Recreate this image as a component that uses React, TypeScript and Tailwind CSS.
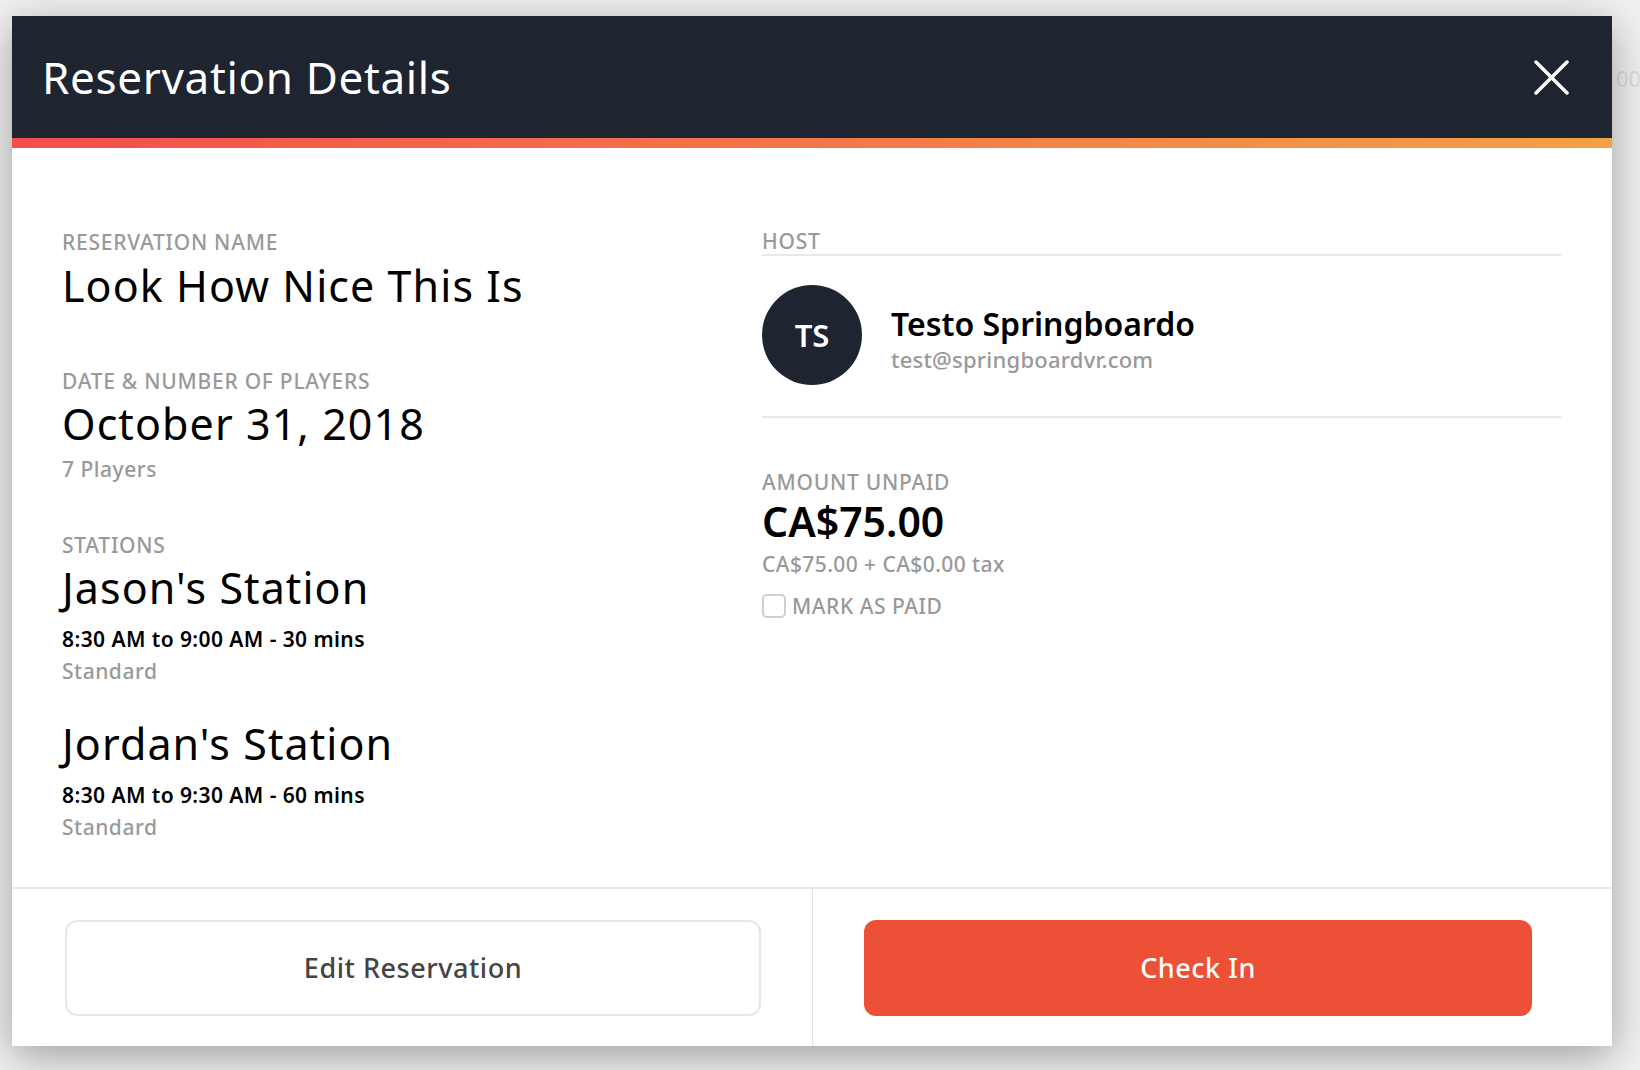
import React from 'react';

const font = { fontFamily: '"Noto Sans", "Open Sans", Arial, sans-serif' };

const Label: React.FC<{ children: React.ReactNode; className?: string }> = ({ children, className = '' }) => (
  <div className={`text-[21px] leading-[28px] font-medium tracking-[0.035em] uppercase text-[#999999] ${className}`}>{children}</div>
);

const Station: React.FC<{ name: string; time: string; kind: string; className?: string }> = ({ name, time, kind, className = '' }) => (
  <div className={className}>
    <div className="text-[43px] leading-[50px] tracking-[0.025em] text-black">{name}</div>
    <div className="mt-[12px] text-[21px] leading-[28px] font-semibold tracking-[0.02em] text-black">{time}</div>
    <div className="mt-[4px] text-[21px] leading-[28px] font-medium tracking-[0.025em] text-[#999999]">{kind}</div>
  </div>
);

export default function App() {
  return (
    <div className="relative w-[1640px] h-[1070px] bg-[#f1f1f1] pt-[16px] pl-[12px] overflow-hidden" style={font}>
      <span className="absolute left-[1616px] top-[62px] text-[22px] text-[#dddddd]">00</span>
      <div className="relative w-[1600px] h-[1030px] bg-white flex flex-col shadow-[0_10px_40px_rgba(0,0,0,0.35)]">
        {/* Header */}
        <div className="h-[122px] bg-[#1e2430] flex items-center justify-between pl-[30px] pr-[43px]">
          <h1 className="text-[44px] leading-[60px] font-normal tracking-[0.015em] text-white">Reservation Details</h1>
          <button className="w-[35px] h-[35px] flex items-center justify-center">
            <svg viewBox="0 0 35 35" className="w-[35px] h-[35px]">
              <path d="M2 2 L33 33 M33 2 L2 33" stroke="white" strokeWidth="3.5" strokeLinecap="round" />
            </svg>
          </button>
        </div>
        <div className="h-[10px] bg-gradient-to-r from-[#f44c4d] via-[#f37648] to-[#f3a145]" />

        {/* Body */}
        <div className="flex-1 flex pt-[80px] pl-[50px] pr-[51px]">
          {/* Left column */}
          <div className="w-[700px]">
            <Label>Reservation Name</Label>
            <div className="mt-[5px] text-[43px] leading-[50px] tracking-[0.025em] text-black">Look How Nice This Is</div>

            <Label className="mt-[56px]">Date &amp; Number of Players</Label>
            <div className="mt-[4px] text-[43px] leading-[50px] tracking-[0.025em] text-black">October 31, 2018</div>
            <div className="mt-[6px] text-[21px] leading-[28px] font-medium tracking-[0.025em] text-[#999999]">7 Players</div>

            <Label className="mt-[48px]">Stations</Label>
            <Station className="mt-[4px]" name="Jason's Station" time="8:30 AM to 9:00 AM - 30 mins" kind="Standard" />
            <Station className="mt-[34px]" name="Jordan's Station" time="8:30 AM to 9:30 AM - 60 mins" kind="Standard" />
          </div>

          {/* Right column */}
          <div className="flex-1">
            <div className="text-[21px] leading-[26px] font-medium tracking-[0.035em] uppercase text-[#999999] border-b-2 border-[#e8e8e8]">Host</div>
            <div className="mt-[29px] pb-[31px] border-b-2 border-[#e8e8e8] flex items-center">
              <div className="w-[100px] h-[100px] rounded-full bg-[#1e2430] flex items-center justify-center text-white text-[31px] font-semibold">
                TS
              </div>
              <div className="ml-[29px] pt-[8px]">
                <div className="text-[32px] leading-[40px] font-semibold text-black">Testo Springboardo</div>
                <div className="text-[22px] leading-[30px] font-medium tracking-[0.01em] text-[#999999]">test@springboardvr.com</div>
              </div>
            </div>

            <Label className="mt-[50px] leading-[24px]">Amount Unpaid</Label>
            <div className="mt-[2px] text-[41px] leading-[46px] font-semibold text-black">CA$75.00</div>
            <div className="mt-[6px] text-[21px] leading-[28px] font-medium tracking-[0.02em] text-[#999999]">CA$75.00 + CA$0.00 tax</div>
            <label className="mt-[14px] flex items-center">
              <span className="w-[24px] h-[24px] rounded-[5px] border-2 border-[#cfcfcf] bg-white" />
              <span className="ml-[6px] text-[21px] leading-[28px] font-medium tracking-[0.025em] uppercase text-[#999999]">Mark as paid</span>
            </label>
          </div>
        </div>

        {/* Footer */}
        <div className="h-[159px] border-t-2 border-[#e8e8e8] flex">
          <div className="w-[801px] border-r border-[#e4e4e4] pt-[31px] pl-[53px]">
            <button className="w-[696px] h-[96px] rounded-[12px] border-2 border-[#e6e6e6] bg-white text-[27px] font-medium tracking-[0.02em] text-[#444444]">
              Edit Reservation
            </button>
          </div>
          <div className="flex-1 pt-[31px] pl-[51px]">
            <button className="w-[668px] h-[96px] rounded-[12px] bg-[#ec5036] text-[27px] font-medium tracking-[0.02em] text-white">
              Check In
            </button>
          </div>
        </div>
      </div>
    </div>
  );
}
